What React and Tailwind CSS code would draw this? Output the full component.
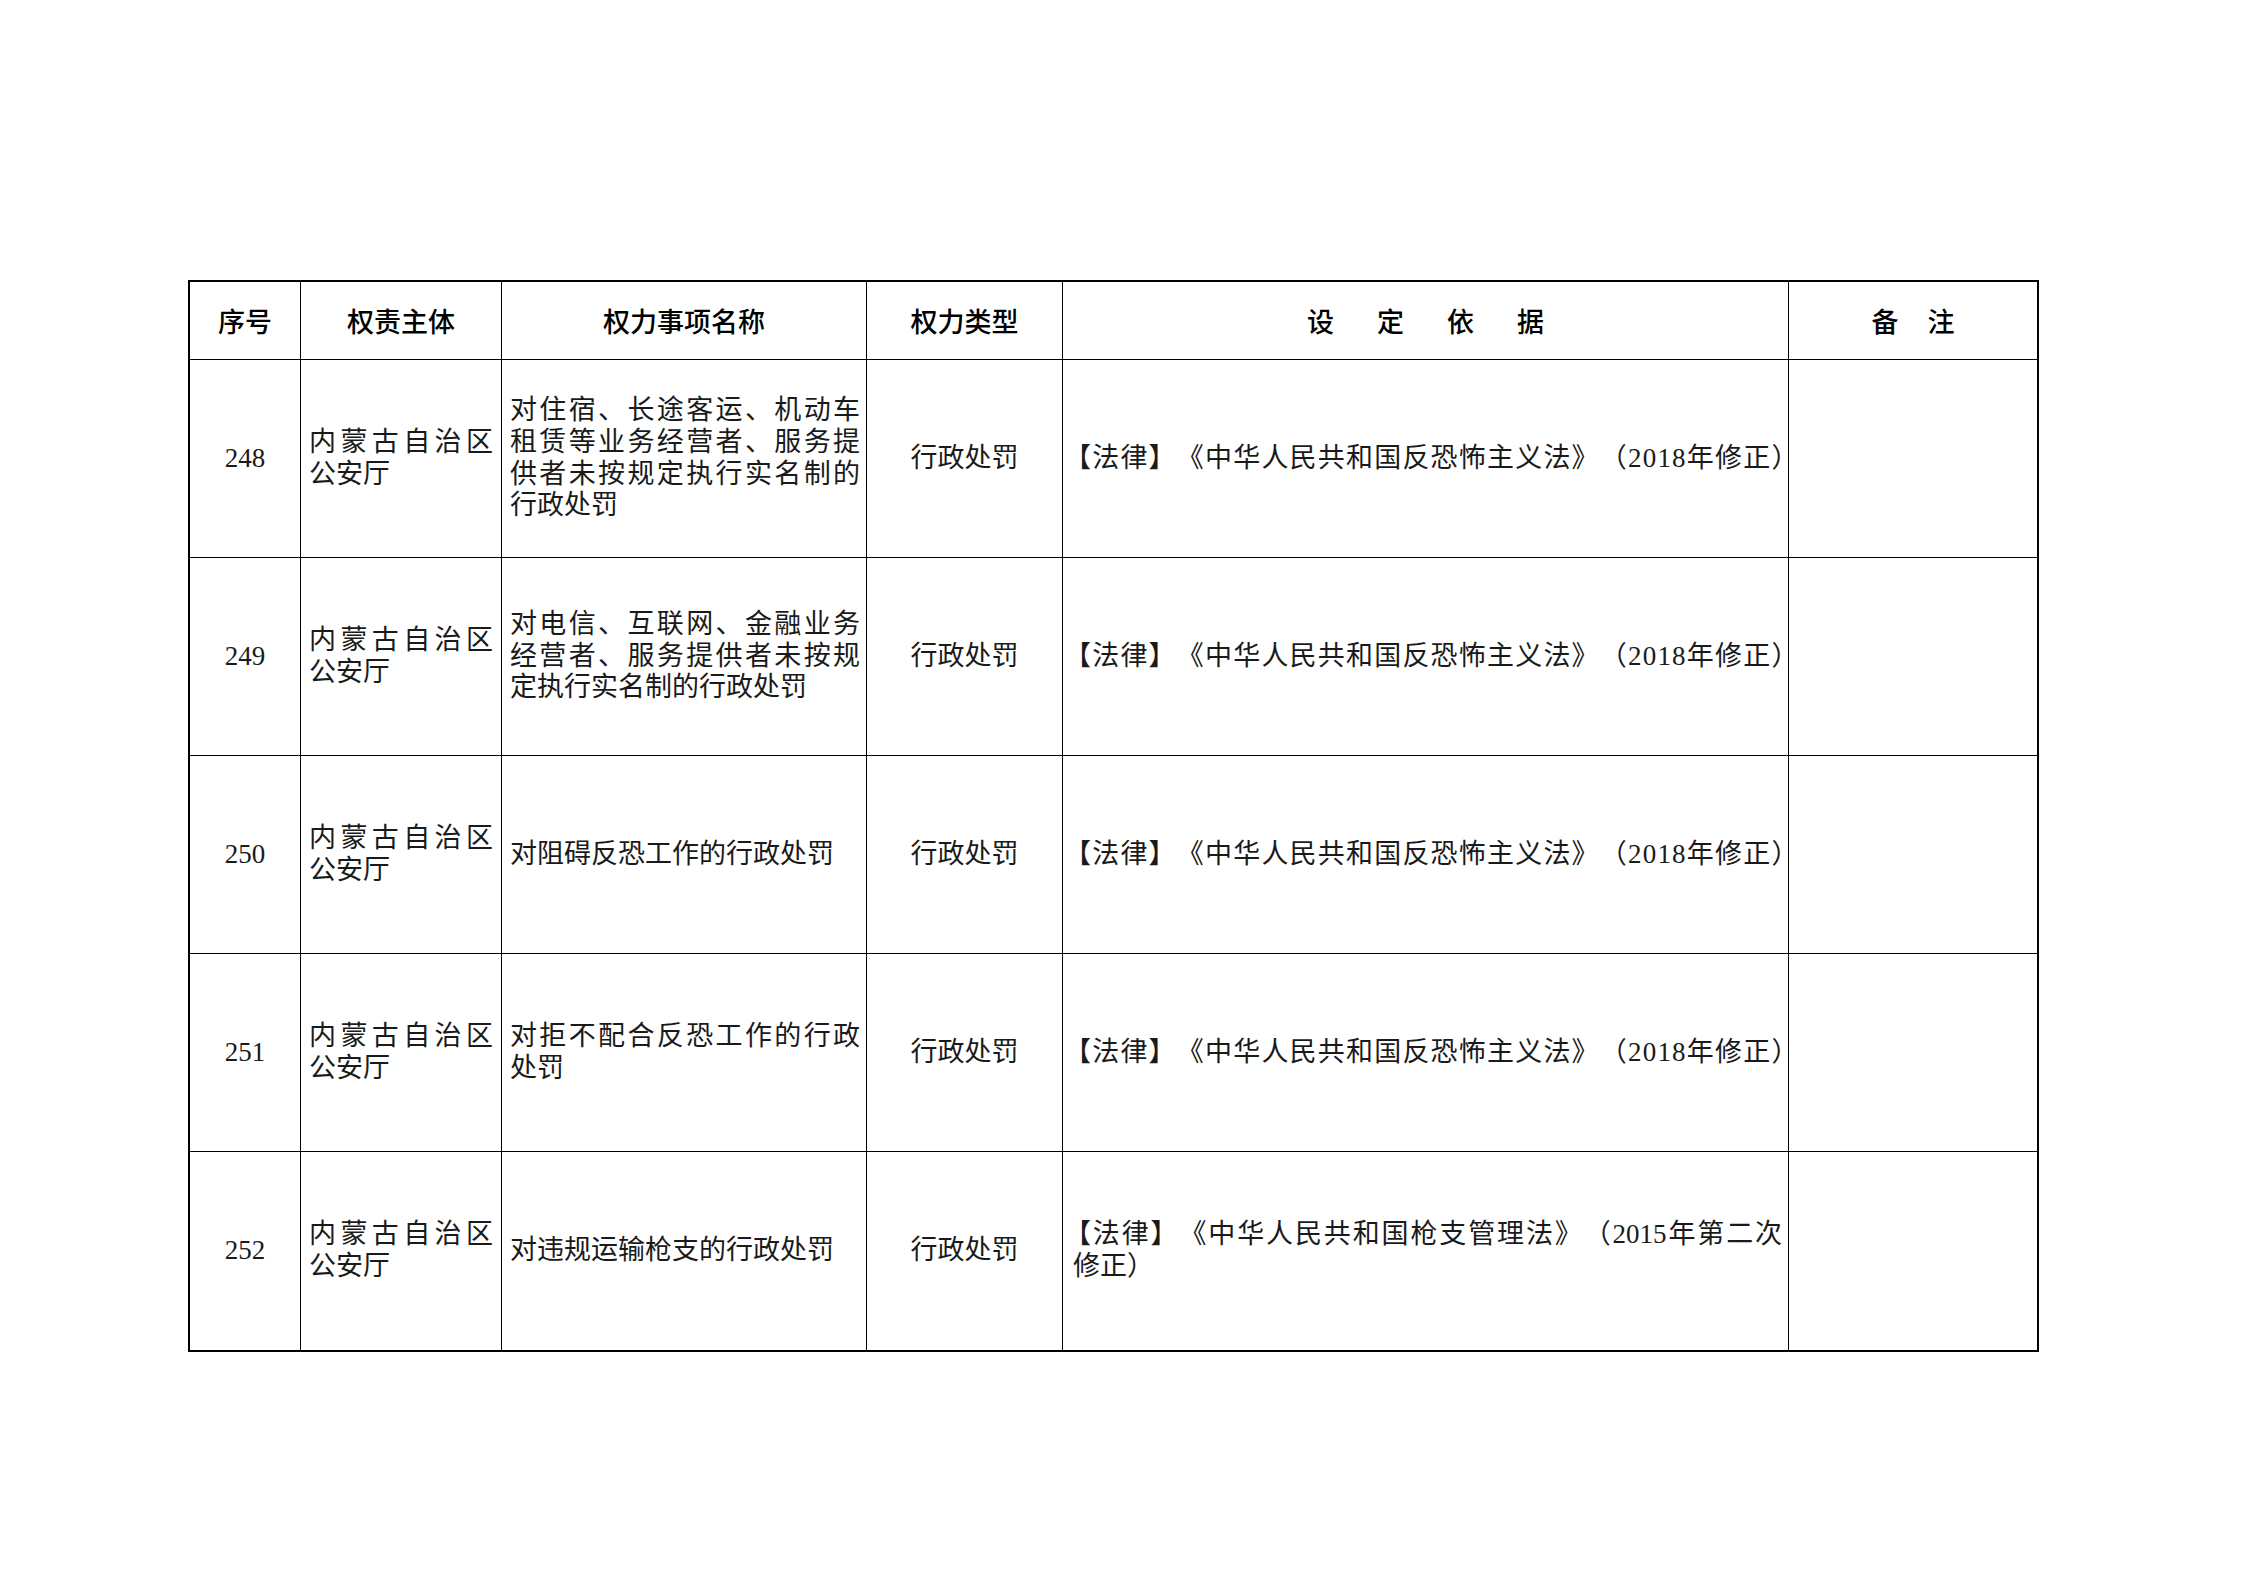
import React from "react";

const LAW1 = "【法律】《中华人民共和国反恐怖主义法》（2018年修正）";

const rows = [
  {
    no: "248",
    item: "对住宿、长途客运、机动车租赁等业务经营者、服务提供者未按规定执行实名制的行政处罚",
    basis: LAW1,
  },
  {
    no: "249",
    item: "对电信、互联网、金融业务经营者、服务提供者未按规定执行实名制的行政处罚",
    basis: LAW1,
  },
  { no: "250", item: "对阻碍反恐工作的行政处罚", basis: LAW1 },
  { no: "251", item: "对拒不配合反恐工作的行政处罚", basis: LAW1 },
  { no: "252", item: "对违规运输枪支的行政处罚", basis: null },
];

const cols = "grid grid-cols-[111px_201px_365px_196px_726px_248px]";
const bodyFont =
  "font-['Liberation_Serif','Noto_Sans_CJK_SC',serif] text-[27px] leading-[31.7px] text-[#1a1a1a] [text-spacing-trim:space-all]";
const headFont =
  "font-['Noto_Sans_CJK_SC',sans-serif] text-[27px] font-medium text-black leading-none";

function Header() {
  return (
    <div className={`${cols} h-[78px] border-b border-black ${headFont}`}>
      <div className="flex items-center justify-center border-r border-black">序号</div>
      <div className="flex items-center justify-center border-r border-black">权责主体</div>
      <div className="flex items-center justify-center border-r border-black">权力事项名称</div>
      <div className="flex items-center justify-center border-r border-black">权力类型</div>
      <div className="flex items-center justify-center gap-[43px] border-r border-black">
        <span>设</span>
        <span>定</span>
        <span>依</span>
        <span>据</span>
      </div>
      <div className="flex items-center justify-center gap-[29px]">
        <span>备</span>
        <span>注</span>
      </div>
    </div>
  );
}

function Row({ r, last }) {
  return (
    <div className={`${cols} h-[198px] ${last ? "" : "border-b border-black"} ${bodyFont}`}>
      <div className="flex items-center justify-center border-r border-black">{r.no}</div>
      <div className="flex items-center border-r border-black px-[8px]">
        <div className="w-full text-justify">内蒙古自治区公安厅</div>
      </div>
      <div className="flex items-center border-r border-black pl-[8px] pr-[6px]">
        <div className="w-full text-justify">{r.item}</div>
      </div>
      <div className="flex items-center justify-center border-r border-black">行政处罚</div>
      <div className="flex items-center border-r border-black pl-[1px] pr-[6px]">
        {r.basis ? (
          <div className="w-full whitespace-nowrap tracking-[1.2px]">{r.basis}</div>
        ) : (
          <div className="w-full">
            <div className="whitespace-nowrap text-justify [text-align-last:justify]">
              【法律】《中华人民共和国枪支管理法》（2015年第二次
            </div>
            <div className="pl-[9px]">修正）</div>
          </div>
        )}
      </div>
      <div></div>
    </div>
  );
}

export default function App() {
  return (
    <div className="min-h-screen w-full bg-white pt-[280px] pl-[188px]">
      <div className="w-[1851px] border-2 border-black">
        <Header />
        {rows.map((r, i) => (
          <Row key={r.no} r={r} last={i === rows.length - 1} />
        ))}
      </div>
    </div>
  );
}
